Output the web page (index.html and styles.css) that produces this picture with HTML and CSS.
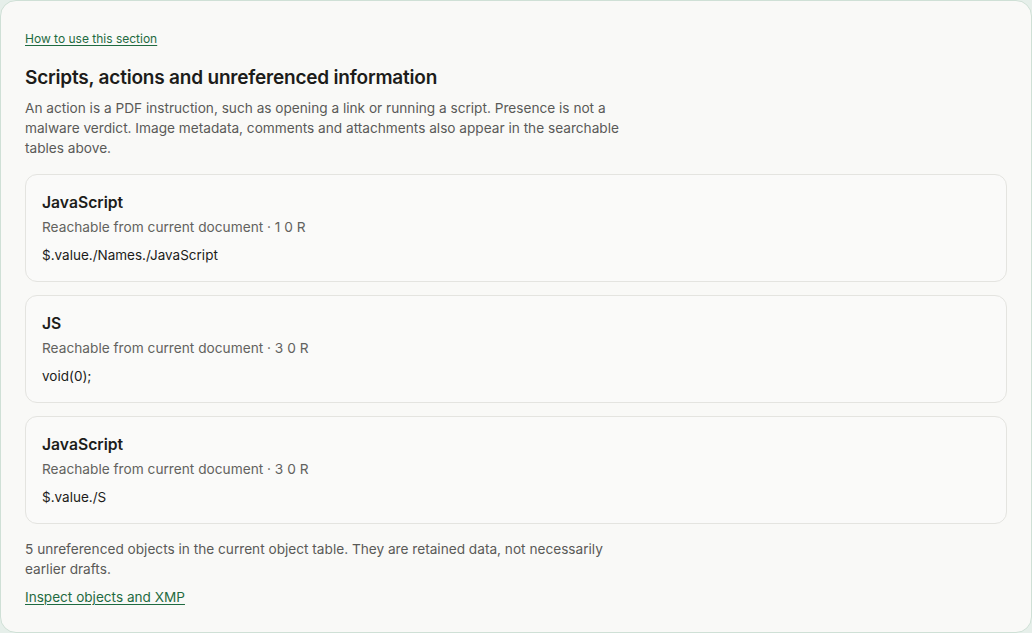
FILE: index.html
```html
<!DOCTYPE html>
<html lang="en">
<head>
    <meta charset="UTF-8">
    <meta name="viewport" content="width=device-width, initial-scale=1.0">
    <title>Scripts, actions and unreferenced information</title>
    <link rel="stylesheet" href="styles.css">
</head>
<body>
    <section class="panel">
        <a href="#" class="help-link">How to use this section</a>

        <h2 class="panel-title">Scripts, actions and unreferenced information</h2>
        <p class="panel-intro">An action is a PDF instruction, such as opening a link or running a script. Presence is not a malware verdict. Image metadata, comments and attachments also appear in the searchable tables above.</p>

        <div class="action-list">
            <div class="action-card">
                <p class="action-name">JavaScript</p>
                <p class="action-meta">Reachable from current document · 1 0 R</p>
                <p class="action-path">$.value./Names./JavaScript</p>
            </div>
            <div class="action-card">
                <p class="action-name">JS</p>
                <p class="action-meta">Reachable from current document · 3 0 R</p>
                <p class="action-path">void(0);</p>
            </div>
            <div class="action-card">
                <p class="action-name">JavaScript</p>
                <p class="action-meta">Reachable from current document · 3 0 R</p>
                <p class="action-path">$.value./S</p>
            </div>
        </div>

        <p class="panel-note">5 unreferenced objects in the current object table. They are retained data, not necessarily earlier drafts.</p>
        <a href="#" class="inspect-link">Inspect objects and XMP</a>
    </section>
</body>
</html>
```

FILE: styles.css
```css
body {
    margin: 0;
    font-family: Inter, "Noto Sans", Arial, sans-serif;
    background-color: #e6efea;
    color: #1c1c1a;
}
.panel {
    box-sizing: border-box;
    min-height: 633px;
    padding: 26px 24px 24px;
    background-color: #f9f9f7;
    border: 1px solid #cfe0d6;
    border-radius: 16px;
}
.help-link,
.inspect-link {
    color: #1f6b41;
    text-decoration: underline;
    text-underline-offset: 2px;
}
.help-link {
    display: inline-block;
    font-size: 12px;
    line-height: 16px;
}
.panel-title {
    margin: 18px 0 0;
    font-size: 19px;
    font-weight: 600;
    line-height: 26px;
    letter-spacing: -0.2px;
}
.panel-intro {
    max-width: 604px;
    margin: 7px 0 0;
    font-size: 13.65px;
    line-height: 20px;
    color: #5a5a57;
}
.action-list {
    display: flex;
    flex-direction: column;
    gap: 13px;
    margin-top: 16px;
}
.action-card {
    padding: 17px 16px 16px;
    background-color: #fafaf9;
    border: 1px solid #e4e4e0;
    border-radius: 12px;
}
.action-card p {
    margin: 0;
}
.action-name {
    font-size: 15.7px;
    font-weight: 600;
    line-height: 22px;
}
.action-meta {
    margin-top: 3px !important;
    font-size: 13.7px;
    line-height: 20px;
    color: #62625e;
}
.action-path {
    margin-top: 8px !important;
    font-size: 13.5px;
    line-height: 20px;
}
.panel-note {
    max-width: 604px;
    margin: 15px 0 0;
    font-size: 13.65px;
    line-height: 20px;
    color: #5a5a57;
}
.inspect-link {
    display: inline-block;
    margin-top: 8px;
    font-size: 13.6px;
    line-height: 20px;
}
```
